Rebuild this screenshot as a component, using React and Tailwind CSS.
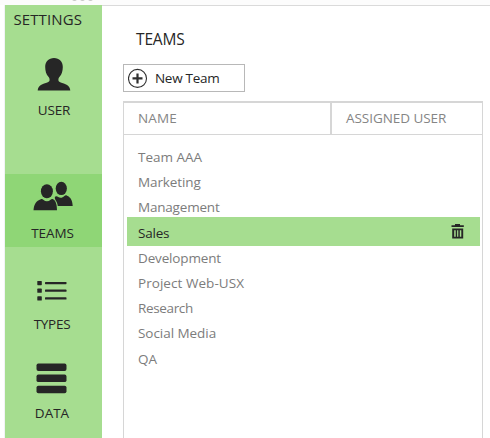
import React from "react";

function UserIcon() {
  return (
    <svg className="block h-[34px] w-[34px]" viewBox="0 0 34 34" fill="#262626">
      <path d="M17 1c5.300 0 8.800 3.600 8.800 9 0 3.800-1.100 7.400-3 9.600-1 1.200-1.300 2-1.400 3.200-.1 1.200.5 1.900 1.800 2.400C28.300 27 33 28.300 33.300 33.500H.7C1 28.300 5.700 27 10.800 25.200c1.300-.5 1.900-1.200 1.800-2.400-.1-1.200-.4-2-1.400-3.200-1.900-2.200-3-5.800-3-9.600C8.200 4.600 11.700 1 17 1z" />
    </svg>
  );
}

function TeamsIcon() {
  return (
    <svg className="mr-px block h-[30px] w-10" viewBox="0 0 40 30" fill="#262626">
      <ellipse cx="28.300" cy="7.400" rx="5.600" ry="6.700" />
      <path d="M21.900 15.800c1-.9 2.200-.9 3.300.2 1.900 1.200 4.300 1 6.200-1 .8-.8 1.700-.9 2.700-.3 3.500 1.500 5.200 4.200 5.600 10.200H24.800c-.4-2.400-1-4.200-2.200-5.700-.7-1-.9-2.500-.7-3.400z" />
      <ellipse cx="13.900" cy="10.300" rx="6" ry="7" />
      <path d="M7.800 18.300c.9-.5 1.700-.4 2.500.4 2.300 2 5 2 7.300 0 .8-.8 1.600-.9 2.500-.4 2.400 1.300 3.800 4.200 3.900 11H.5c.6-6.300 2.700-9.300 7.300-11z" />
    </svg>
  );
}

function TypesIcon() {
  return (
    <svg className="mr-[3px] block h-5 w-[30px]" viewBox="0 0 30 20" fill="#262626">
      <rect x=".3" y="0" width="4.500" height="4.200" rx=".6" />
      <rect x=".3" y="7.600" width="4.500" height="4.200" rx=".6" />
      <rect x=".3" y="15.300" width="4.500" height="4.200" rx=".6" />
      <rect x="8" y="1" width="21.500" height="2.200" rx=".6" />
      <rect x="8" y="8.600" width="21.500" height="2.200" rx=".6" />
      <rect x="8" y="16.300" width="21.500" height="2.200" rx=".6" />
    </svg>
  );
}

function DataIcon() {
  return (
    <svg className="mr-1 block h-[31px] w-[31px]" viewBox="0 0 31 31" fill="#262626">
      <rect x=".5" y=".5" width="30" height="7.500" rx="1.900" />
      <rect x=".5" y="11.600" width="30" height="7.500" rx="1.900" />
      <rect x=".5" y="22.700" width="30" height="7.500" rx="1.900" />
    </svg>
  );
}

function PlusIcon() {
  return (
    <svg className="block h-5 w-5 shrink-0" viewBox="0 0 20 20" fill="none" stroke="#303030">
      <circle cx="9.500" cy="10.400" r="9" strokeWidth="1.100" />
      <path d="M9.500 5.400v10M4.500 10.400h10" strokeWidth="2.200" />
    </svg>
  );
}

function TrashIcon() {
  return (
    <svg className="mb-[3px] block h-[15px] w-[13px]" viewBox="0 0 13 15">
      <path fill="#262626" fillRule="evenodd" d="M4 0h5v1.300h3.800v1.700H.5V1.300H4zM1.200 4.500h11v10H1.200zM3.200 6.200v6.600h1.500V6.200zm2.900 0v6.600h1.200V6.200zm2.700 0v6.600h1.500V6.200z" />
    </svg>
  );
}

const teams = [
  { name: "Team AAA", tracking: "tracking-normal" },
  { name: "Marketing", tracking: "tracking-[-0.1px]" },
  { name: "Management", tracking: "tracking-[-0.2px]" },
  { name: "Sales", tracking: "tracking-[-0.2px]", selected: true },
  { name: "Development", tracking: "tracking-[-0.15px]" },
  { name: "Project Web-USX", tracking: "tracking-[0.05px]" },
  { name: "Research", tracking: "tracking-[-0.35px]" },
  { name: "Social Media", tracking: "tracking-[-0.05px]" },
  { name: "QA", tracking: "tracking-normal" },
];

export default function App() {
  return (
    <div className="flex h-[438px] w-[490px] flex-col overflow-hidden bg-white font-['Open_Sans','Noto_Sans',sans-serif] text-[13.5px] leading-5 text-[#262626]">
      <div className="flex h-[5px] shrink-0 gap-[3px] bg-[#fcfcfc] pl-[72px]">
        <i className="-mt-1 h-[5px] w-[5px] rounded-full bg-[#c8c8c8]" />
        <i className="-mt-1 h-[5px] w-[5px] rounded-full bg-[#c8c8c8]" />
        <i className="-mt-1 h-[5px] w-[5px] rounded-full bg-[#c8c8c8]" />
      </div>
      <div className="flex min-h-0 flex-1">
        <div className="w-[5px] shrink-0 border-r border-[#f2f2f5]" />
        <nav className="flex w-[97px] shrink-0 flex-col bg-[#a6dd90]">
          <div className="h-[52px] pt-[4px] pl-[8.5px] text-[15px] tracking-[0.1px]">SETTINGS</div>
          <div className="flex h-[117px] flex-col items-center gap-[9px]">
            <UserIcon />
            <span className="ml-px tracking-[-0.2px]">USER</span>
          </div>
          <div className="flex h-[73px] flex-col items-center gap-[12px] bg-[#8fd676] pt-[7px]">
            <TeamsIcon />
            <span className="mr-[2px] tracking-[-0.1px]">TEAMS</span>
          </div>
          <div className="flex h-[116px] flex-col items-center gap-[13px] pt-[34px]">
            <TypesIcon />
            <span className="mr-[3px] tracking-[-0.3px]">TYPES</span>
          </div>
          <div className="flex flex-col items-center gap-[9px]">
            <DataIcon />
            <span className="mr-[3px]">DATA</span>
          </div>
        </nav>
        <main className="flex flex-1 flex-col border-t border-[#dadada] pr-[7px] pl-[21px]">
          <h1 className="mt-[23px] ml-[13px] h-[35px] text-[15.5px] leading-5 tracking-[-0.15px]">TEAMS</h1>
          <button className="flex h-[28px] w-[122px] shrink-0 items-center gap-[7px] border border-[#b8b8b8] pl-[4px]">
            <PlusIcon />
            <span className="tracking-[-0.3px]">New Team</span>
          </button>
          <section className="mt-[9px] flex flex-1 flex-col border-x border-t-2 border-[#d6d6d6]">
            <header className="flex h-[32px] shrink-0 border-b border-[#d6d6d6] text-[#858585]">
              <div className="w-[208px] border-r-2 border-[#d6d6d6] pt-[5px] pl-[14px] tracking-[0.15px]">NAME</div>
              <div className="pt-[5px] pl-[14px] tracking-[-0.05px]">ASSIGNED USER</div>
            </header>
            <ul className="flex flex-col pt-[9px] pr-[2px] pl-[3px] text-[#7c7c7c]">
              {teams.map((team) => (
                <li
                  key={team.name}
                  className={
                    team.selected
                      ? "-mt-[2px] -mb-px flex h-[29px] items-center justify-between bg-[#a6dd90] pt-[3px] pr-[16px] pl-[11px] text-[#262626]"
                      : "flex h-[25px] items-center pl-[11px] last:mt-px"
                  }
                >
                  <span className={team.tracking}>{team.name}</span>
                  {team.selected && <TrashIcon />}
                </li>
              ))}
            </ul>
          </section>
        </main>
      </div>
    </div>
  );
}
